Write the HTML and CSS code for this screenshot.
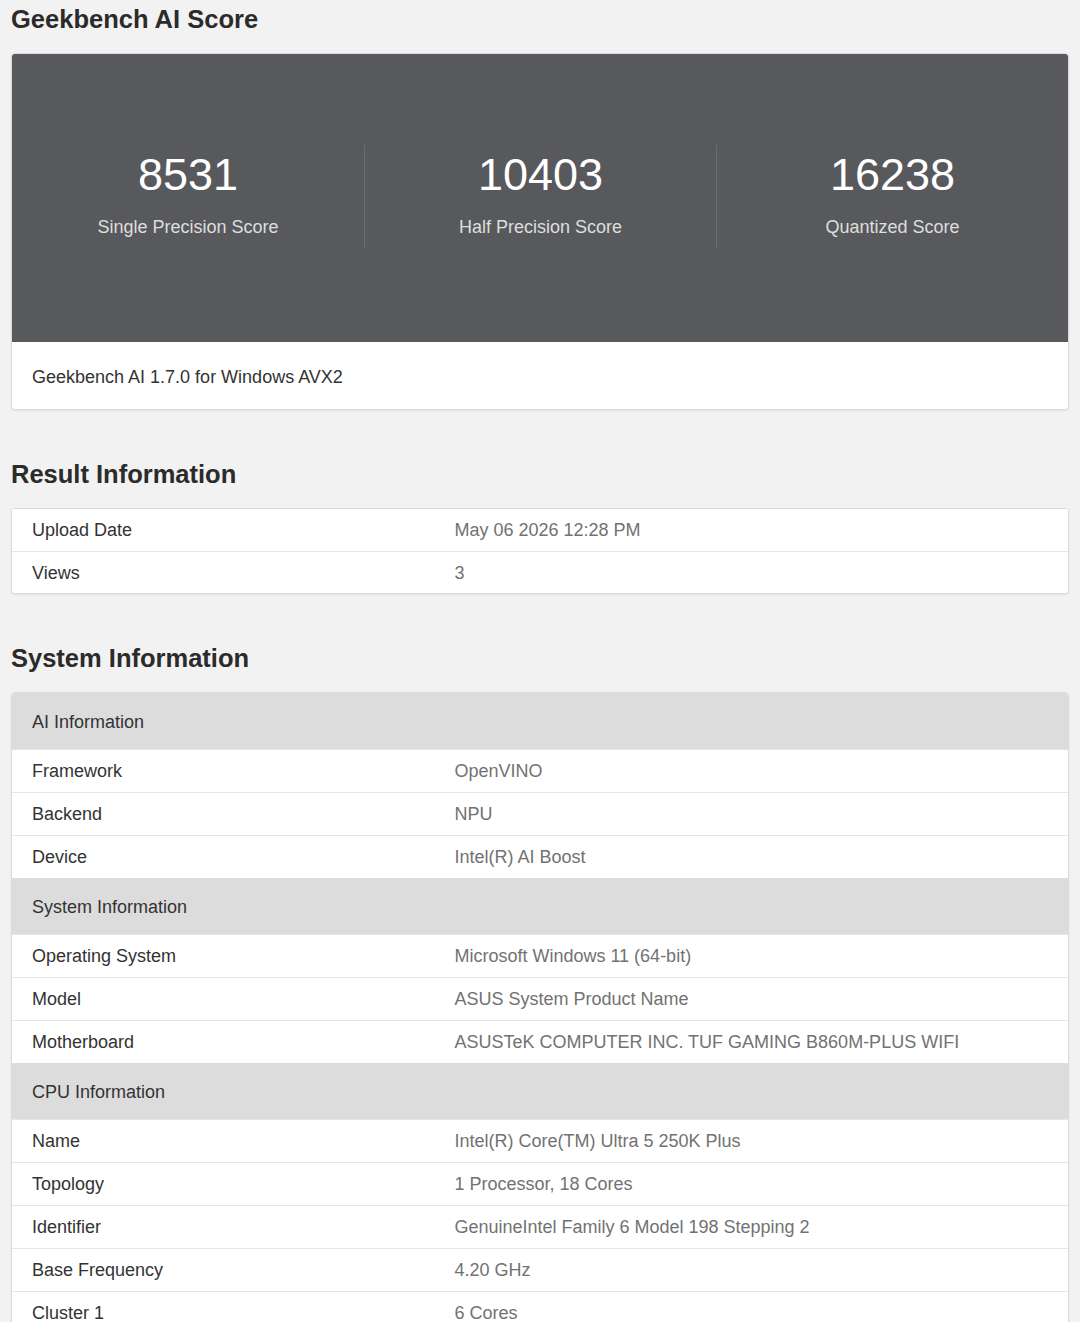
FILE: index.html
```html
<!DOCTYPE html>
<html lang="en">
<head>
<meta charset="utf-8">
<title>Geekbench AI Score</title>
<link rel="stylesheet" href="styles.css">
</head>
<body>
<main class="page">
  <h1 class="heading heading-first">Geekbench AI Score</h1>
  <section class="card score-card">
    <div class="scores">
      <div class="score">
        <div class="score-value">8531</div>
        <div class="score-label">Single Precision Score</div>
      </div>
      <div class="score">
        <div class="score-value">10403</div>
        <div class="score-label">Half Precision Score</div>
      </div>
      <div class="score">
        <div class="score-value">16238</div>
        <div class="score-label">Quantized Score</div>
      </div>
    </div>
    <div class="score-footer">Geekbench AI 1.7.0 for Windows AVX2</div>
  </section>

  <h2 class="heading">Result Information</h2>
  <section class="card table table-compact">
    <div class="row"><div class="name">Upload Date</div><div class="value">May 06 2026 12:28 PM</div></div>
    <div class="row"><div class="name">Views</div><div class="value">3</div></div>
  </section>

  <h2 class="heading">System Information</h2>
  <section class="card table">
    <div class="row group"><div class="name">AI Information</div></div>
    <div class="row"><div class="name">Framework</div><div class="value">OpenVINO</div></div>
    <div class="row"><div class="name">Backend</div><div class="value">NPU</div></div>
    <div class="row"><div class="name">Device</div><div class="value">Intel(R) AI Boost</div></div>
    <div class="row group"><div class="name">System Information</div></div>
    <div class="row"><div class="name">Operating System</div><div class="value">Microsoft Windows 11 (64-bit)</div></div>
    <div class="row"><div class="name">Model</div><div class="value">ASUS System Product Name</div></div>
    <div class="row"><div class="name">Motherboard</div><div class="value">ASUSTeK COMPUTER INC. TUF GAMING B860M-PLUS WIFI</div></div>
    <div class="row group"><div class="name">CPU Information</div></div>
    <div class="row"><div class="name">Name</div><div class="value">Intel(R) Core(TM) Ultra 5 250K Plus</div></div>
    <div class="row"><div class="name">Topology</div><div class="value">1 Processor, 18 Cores</div></div>
    <div class="row"><div class="name">Identifier</div><div class="value">GenuineIntel Family 6 Model 198 Stepping 2</div></div>
    <div class="row"><div class="name">Base Frequency</div><div class="value">4.20 GHz</div></div>
    <div class="row"><div class="name">Cluster 1</div><div class="value">6 Cores</div></div>
  </section>
</main>
</body>
</html>
```

FILE: styles.css
```css
* {
  box-sizing: border-box;
}

html, body {
  margin: 0;
  padding: 0;
  background: #f2f2f2;
}

body {
  font-family: "Liberation Sans", Arial, sans-serif;
  font-size: 18px;
  color: #333333;
}

.page {
  padding: 0 11px 0 11px;
  width: 1080px;
}

.heading {
  margin: 45px 0 15px 0;
  font-size: 25.5px;
  line-height: 38px;
  font-weight: bold;
  color: #2b2b2b;
}

.heading-first {
  margin-top: 0;
}

.card {
  background: #ffffff;
  border: 1px solid #dcdcdc;
  border-radius: 4px;
  box-shadow: 0 1px 2px rgba(0, 0, 0, 0.08);
  overflow: hidden;
  width: 1058px;
}

.scores {
  background: #58595d;
  display: grid;
  grid-template-columns: 1fr 1fr 1fr;
  padding: 91px 0 94px 0;
}

.score {
  text-align: center;
  padding-bottom: 9px;
}

.score + .score {
  border-left: 1px solid #6c6d71;
}

.score-value {
  font-size: 45px;
  line-height: 60px;
  color: #ffffff;
}

.score-label {
  margin-top: 10px;
  font-size: 18px;
  line-height: 24px;
  color: #dedede;
}

.score-footer {
  padding: 23px 20px 20px 20px;
  line-height: 24px;
  font-size: 18px;
  color: #333333;
}

.row {
  display: grid;
  grid-template-columns: 40% 60%;
  min-height: 43px;
  align-items: center;
  border-top: 1px solid #e6e6e6;
  line-height: 24px;
  background: #ffffff;
}

.table-compact .row {
  min-height: 42px;
}

.row:first-child {
  border-top: none;
}

.name,
.value {
  padding: 0 20px;
}

.name {
  color: #333333;
}

.value {
  color: #727272;
}

.group {
  background: #dcdcdd;
  min-height: 56px;
  padding-top: 1px;
  border-top: none;
  grid-template-columns: 1fr;
}
```
